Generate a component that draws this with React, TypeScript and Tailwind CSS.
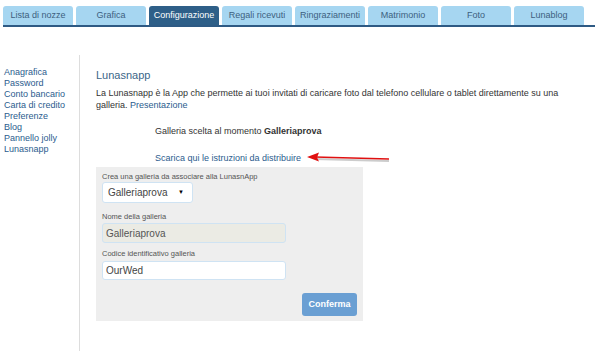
import React from "react"

const tabs = [
  "Lista di nozze",
  "Grafica",
  "Configurazione",
  "Regali ricevuti",
  "Ringraziamenti",
  "Matrimonio",
  "Foto",
  "Lunablog",
]

const menu = [
  "Anagrafica",
  "Password",
  "Conto bancario",
  "Carta di credito",
  "Preferenze",
  "Blog",
  "Pannello jolly",
  "Lunasnapp",
]

function Arrow() {
  return (
    <svg width="90" height="14" viewBox="0 0 90 14" className="ml-[6px]">
      <line x1="8" y1="8" x2="82" y2="10" stroke="#9a9a9a" strokeWidth="2" opacity="0.5" />
      <line x1="8" y1="6" x2="82" y2="8" stroke="#e01010" strokeWidth="1.6" />
      <polygon points="0,6 12,1.5 10,6.5 12,10.5" fill="#e01010" />
    </svg>
  )
}

export default function App() {
  return (
    <div className="w-[599px] h-[357px] bg-white text-[9px] text-[#333] font-['Liberation_Sans',Arial,sans-serif] overflow-hidden">
      {/* tabs */}
      <div className="pt-[6px] pl-[3px] pr-[4px]">
        <div className="flex gap-[3px] border-b-2 border-[#2e5a84]">
          {tabs.map((t) => (
            <div
              key={t}
              className={
                t === "Configurazione"
                  ? "w-[70px] h-[19px] rounded-t-[3px] bg-[#2e5f88] text-white flex items-center justify-center whitespace-nowrap"
                  : "w-[70px] h-[19px] rounded-t-[3px] bg-[#a6d6f1] text-[#3d5f80] flex items-center justify-center whitespace-nowrap"
              }
            >
              {t}
            </div>
          ))}
        </div>
      </div>

      <div className="flex mt-[28px]">
        {/* sidebar */}
        <div className="w-[80px] shrink-0 pl-[4px] pt-[12px] border-r border-[#dddddd] h-[296px]">
          {menu.map((m) => (
            <div key={m} className="leading-[11px] text-[#2b5c8e] whitespace-nowrap">
              {m}
            </div>
          ))}
        </div>

        {/* main */}
        <div className="pl-[16px] pt-[13px] flex-1">
          <div className="text-[11px] text-[#3b6688] leading-[14px]">Lunasnapp</div>
          <p className="mt-[5px] leading-[12px] whitespace-nowrap">
            La Lunasnapp è la App che permette ai tuoi invitati di caricare foto dal telefono cellulare o tablet direttamente su una
            <br />
            galleria. <span className="text-[#2b5c8e]">Presentazione</span>
          </p>

          <div className="pl-[59px] mt-[14px] leading-[13px]">
            <div>
              Galleria scelta al momento <b>Galleriaprova</b>
            </div>
            <div className="mt-[13px] flex items-center text-[#2b5c8e]">
              Scarica qui le istruzioni da distribuire
              <Arrow />
            </div>
          </div>

          <div className="mt-[2px] w-[267px] h-[154px] bg-[#eeeeee] px-[6px] pt-[4px]">
            <div className="text-[7.5px] text-[#555] leading-[11px]">Crea una galleria da associare alla LunasnApp</div>
            <div className="w-[91px] h-[21px] bg-white border border-[#cfe3f3] rounded-[3px] flex items-center justify-between pl-[5px] pr-[8px] text-[10px] text-[#444]">
              <span>Galleriaprova</span>
              <span className="text-[6px] text-black">▼</span>
            </div>
            <div className="mt-[8px] text-[7.5px] text-[#555] leading-[11px]">Nome della galleria</div>
            <div className="mt-[1px] w-[184px] h-[20px] bg-[#ebebe4] border border-[#cfe3f3] rounded-[3px] flex items-center px-[3px] text-[10px] text-[#555]">
              Galleriaprova
            </div>
            <div className="mt-[5px] text-[7.5px] text-[#555] leading-[11px]">Codice identificativo galleria</div>
            <div className="mt-[2px] w-[184px] h-[19px] bg-white border border-[#cfe3f3] rounded-[3px] flex items-center px-[3px] text-[10px] text-[#444]">
              OurWed
            </div>
            <div className="flex justify-end mt-[13px]">
              <div className="w-[55px] h-[23px] bg-[#6a9fd3] rounded-[3px] text-white font-bold text-[9px] flex items-center justify-center">
                Conferma
              </div>
            </div>
          </div>
        </div>
      </div>
    </div>
  )
}
